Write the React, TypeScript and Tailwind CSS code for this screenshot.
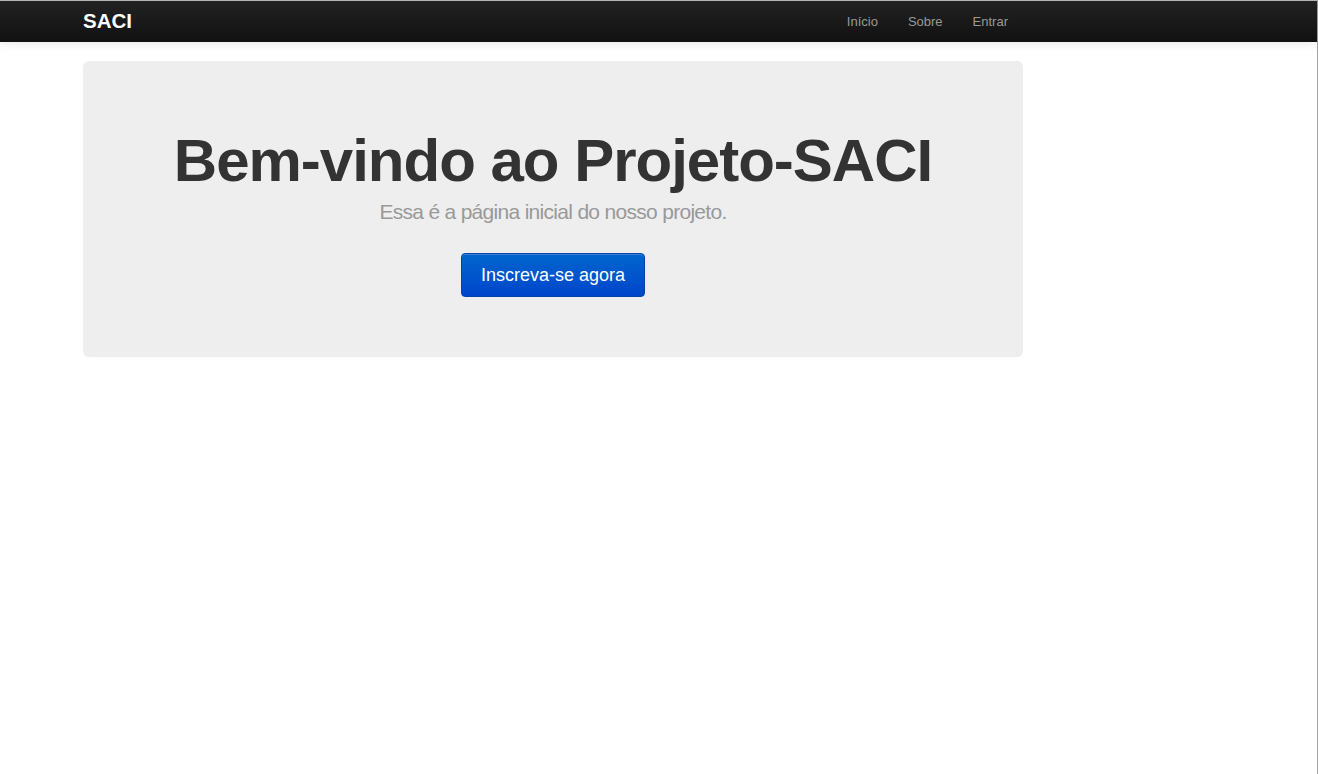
export default function App() {
  const links = ["Início", "Sobre", "Entrar"];

  return (
    <div
      className="min-h-[774px] border-r border-[#a0a0a0] bg-white text-[#333]"
      style={{ fontFamily: '"Liberation Sans", Arial, sans-serif' }}
    >
      <div className="h-[42px] border-t border-[#b5b5b5] bg-gradient-to-b from-[#222222] to-[#111111] shadow-[0_1px_10px_rgba(0,0,0,0.1)]">
        <div className="ml-[83px] flex h-[41px] w-[940px] items-center justify-between">
          <a className="text-[20.5px] font-bold text-white">SACI</a>
          <ul className="flex">
            {links.map((l) => (
              <li key={l}>
                <a className="block px-[15px] text-[13px] leading-[20px] text-[#999]">{l}</a>
              </li>
            ))}
          </ul>
        </div>
      </div>

      <div className="ml-[83px] mt-[19px] w-[940px]">
        <div className="flex flex-col items-center rounded-[6px] bg-[#eeeeee] px-[60px] pb-[60px] pt-[70px]">
          <h1 className="text-[60px] font-bold leading-[60px] tracking-[-1px] text-[#333]">
            Bem-vindo ao Projeto-SACI
          </h1>
          <p className="mb-[26px] mt-[6px] text-[21px] leading-[30px] tracking-[-0.7px] text-[#999]">
            Essa é a página inicial do nosso projeto.
          </p>
          <button className="h-[44px] w-[184px] rounded-[4px] border border-[#0044aa] bg-gradient-to-b from-[#0066cc] to-[#0044cc] text-[18px] text-white shadow-[inset_0_1px_0_rgba(255,255,255,0.2)]">
            Inscreva-se agora
          </button>
        </div>
      </div>
    </div>
  );
}
